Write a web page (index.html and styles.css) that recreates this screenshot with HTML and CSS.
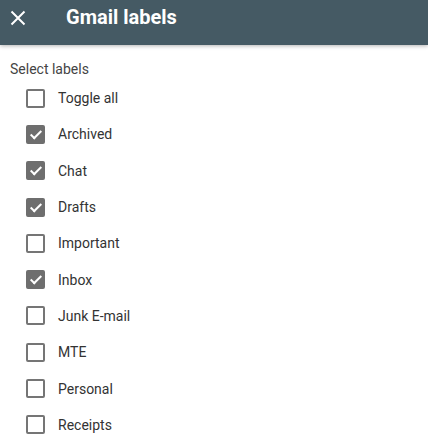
FILE: index.html
```html
<!DOCTYPE html>
<html>
<head>
<title>Gmail labels</title>
<link rel="stylesheet" href="styles.css">
</head>
<body>
<div class="entete">
	<span class="fermer">
		<svg width="16" height="16" viewBox="0 0 16 16"><path d="M1.5 1.5 L14.5 14.5 M14.5 1.5 L1.5 14.5" stroke="#fff" stroke-width="2" fill="none"/></svg>
	</span>
	<h1>Gmail labels</h1>
</div>
<div id="corps">
	<p class="intro">Select labels</p>
	<ul class="liste">
		<li><span class="case"></span>Toggle all</li>
		<li><span class="case coche"></span>Archived</li>
		<li><span class="case coche"></span>Chat</li>
		<li><span class="case coche"></span>Drafts</li>
		<li><span class="case"></span>Important</li>
		<li><span class="case coche"></span>Inbox</li>
		<li><span class="case"></span>Junk E-mail</li>
		<li><span class="case"></span>MTE</li>
		<li><span class="case"></span>Personal</li>
		<li><span class="case"></span>Receipts</li>
	</ul>
</div>
</body>
</html>
```

FILE: styles.css
```css
html,body,ul,li,p,h1 {
	margin:0;
	padding:0;
}
body {
	font-family: Roboto, "Liberation Sans", sans-serif;
	background:#fff;
	overflow:hidden;
}
.entete {
	height:45px;
	background-color:#455a64;
	display:flex;
	align-items:center;
	box-shadow:0 1px 4px rgba(0,0,0,0.3);
	position:relative;
}
.fermer {
	width:16px;
	height:16px;
	margin-left:10px;
	margin-top:-10px;
	display:flex;
}
.entete h1 {
	color:#fff;
	font-size:20px;
	font-weight:700;
	margin-left:40px;
	margin-top:-11px;
}
.intro {
	font-size:14px;
	color:#444;
	padding:15px 0 0 10px;
	line-height:18px;
}
.liste {
	list-style:none;
	padding-top:2px;
}
.liste li {
	display:flex;
	align-items:center;
	height:36.3px;
	padding-left:26px;
	font-size:14px;
	color:#333;
}
.case {
	box-sizing:border-box;
	width:19px;
	height:19px;
	border:2px solid #757575;
	border-radius:2px;
	margin-right:13px;
	position:relative;
}
.case.coche {
	background-color:#6e6e6e;
	border-color:#6e6e6e;
}
.case.coche::after {
	content:"";
	position:absolute;
	left:5px;
	top:1px;
	width:4px;
	height:9px;
	border:solid #fff;
	border-width:0 2px 2px 0;
	transform:rotate(45deg);
}
```
